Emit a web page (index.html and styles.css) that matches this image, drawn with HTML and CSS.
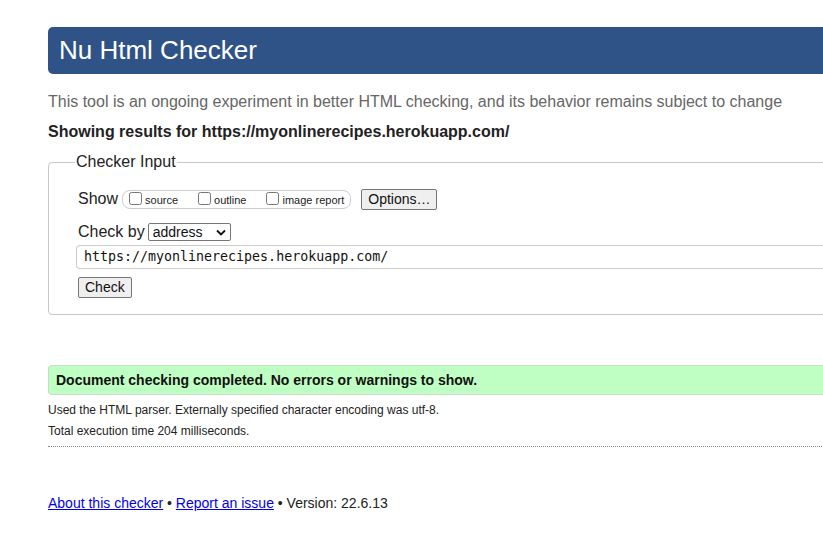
FILE: index.html
```html
<!DOCTYPE html>
<html lang="en">
<head>
<meta charset="utf-8">
<title>Nu Html Checker</title>
<link rel="stylesheet" href="styles.css">
</head>
<body>
<div class="page">
  <h1 class="title">Nu Html Checker</h1>
  <p class="intro">This tool is an ongoing experiment in better HTML checking, and its behavior remains subject to change</p>
  <p class="results">Showing results for https://myonlinerecipes.herokuapp.com/</p>
  <fieldset class="checker">
    <legend class="checker-legend">Checker Input</legend>
    <div class="row show-row">
      <span class="label">Show</span>
      <fieldset class="show-opts">
        <label class="opt"><input type="checkbox" class="cb">source</label>
        <label class="opt"><input type="checkbox" class="cb">outline</label>
        <label class="opt"><input type="checkbox" class="cb">image report</label>
      </fieldset>
      <button class="btn options">Options…</button>
    </div>
    <div class="row by-row">
      <span class="label">Check by</span>
      <span class="select">address<svg class="chev" width="10" height="7" viewBox="0 0 10 7"><path d="M1 1.5 L5 5.5 L9 1.5" fill="none" stroke="#111" stroke-width="1.8"/></svg></span>
    </div>
    <div class="url">https://myonlinerecipes.herokuapp.com/</div>
    <button class="btn check">Check</button>
  </fieldset>
  <div class="success">Document checking completed. No errors or warnings to show.</div>
  <p class="info">Used the HTML parser. Externally specified character encoding was utf-8.</p>
  <p class="info">Total execution time 204 milliseconds.</p>
  <hr class="dotted">
  <p class="footer"><a href="#">About this checker</a> • <a href="#">Report an issue</a> • Version: 22.6.13</p>
</div>
</body>
</html>
```
FILE: styles.css
```css
html { overflow: hidden; }
body {
  margin: 0;
  font-family: "Liberation Sans", Arial, sans-serif;
  color: #222;
  background: #fff;
}
.page {
  width: 1000px;
  padding: 27px 0 0 48px;
}
.title {
  margin: 0;
  height: 47px;
  background: #2f5387;
  color: #fff;
  font-weight: normal;
  font-size: 26px;
  line-height: 47px;
  padding-left: 11px;
  border-radius: 5px 0 0 5px;
}
.intro {
  margin: 18px 0 0;
  font-size: 16px;
  line-height: 20px;
  color: #666;
}
.results {
  margin: 10px 0 0;
  font-size: 16px;
  line-height: 20px;
  font-weight: bold;
  color: #222;
}
.checker {
  margin: 11px 0 0;
  border: 1px solid #c8c8c8;
  border-radius: 4px;
  padding: 17px 0 16px 29px;
  min-width: 0;
}
.checker-legend {
  font-size: 16px;
  padding: 0 1px;
  margin-left: -3px;
  color: #222;
}
.row {
  display: flex;
  align-items: center;
}
.label {
  font-size: 16px;
  margin-right: 4px;
}
.show-row { height: 22px; }
.show-opts {
  margin: 0;
  border: 1px solid #ccc;
  border-radius: 8px;
  padding: 0 6px 0 6px;
  height: 19px;
  box-sizing: border-box;
  display: flex;
  align-items: center;
  gap: 20px;
  min-width: 0;
}
.opt {
  font-size: 11px;
  display: flex;
  align-items: center;
  line-height: 13px;
  position: relative;
  top: 1px;
}
.cb {
  margin: 0 3px 0 0;
  width: 13px;
  height: 13px;
  position: relative;
  top: -2px;
}
.btn {
  font-family: "Liberation Sans", Arial, sans-serif;
  font-size: 14px;
  color: #111;
  background: #efefef;
  border: 1px solid #767676;
  border-radius: 2px;
  padding: 0 6px;
  height: 21px;
  line-height: 19px;
}
.options { margin-left: 10px; padding: 0 5px 0 6px; }
.by-row { margin-top: 12px; height: 20px; }
.select {
  display: inline-flex;
  align-items: center;
  justify-content: space-between;
  width: 83px;
  height: 18px;
  box-sizing: border-box;
  border: 1px solid #767676;
  border-radius: 2px;
  font-size: 14px;
  padding: 0 4px 0 4px;
  margin-left: -1px;
  color: #111;
}
.chev { margin-top: 1px; }
.url {
  margin-top: 3px;
  margin-left: -2px;
  height: 24px;
  box-sizing: border-box;
  border: 1px solid #ccc;
  border-right: 0;
  border-radius: 4px 0 0 4px;
  font-family: "DejaVu Sans Mono", "Liberation Mono", monospace;
  font-size: 13.3px;
  line-height: 22px;
  padding-left: 7px;
  color: #111;
}
.check {
  margin-top: 8px;
  display: block;
}
.success {
  margin-top: 50px;
  height: 30px;
  box-sizing: border-box;
  background: #bfffc3;
  border: 1px solid #c9dcc9;
  border-right: 0;
  border-radius: 4px 0 0 4px;
  font-size: 14px;
  font-weight: bold;
  line-height: 28px;
  padding-left: 7px;
  color: #111;
}
.info {
  margin: 8px 0 0;
  font-size: 12px;
  line-height: 15px;
  color: #222;
}
.info + .info { margin-top: 6px; }
.dotted {
  margin: 7px 0 0;
  border: 0;
  border-top: 1px dotted #888;
  height: 0;
}
.footer {
  margin: 48px 0 0;
  font-size: 14px;
  line-height: 17px;
  color: #222;
}
.footer a { color: #0000ee; }
```
